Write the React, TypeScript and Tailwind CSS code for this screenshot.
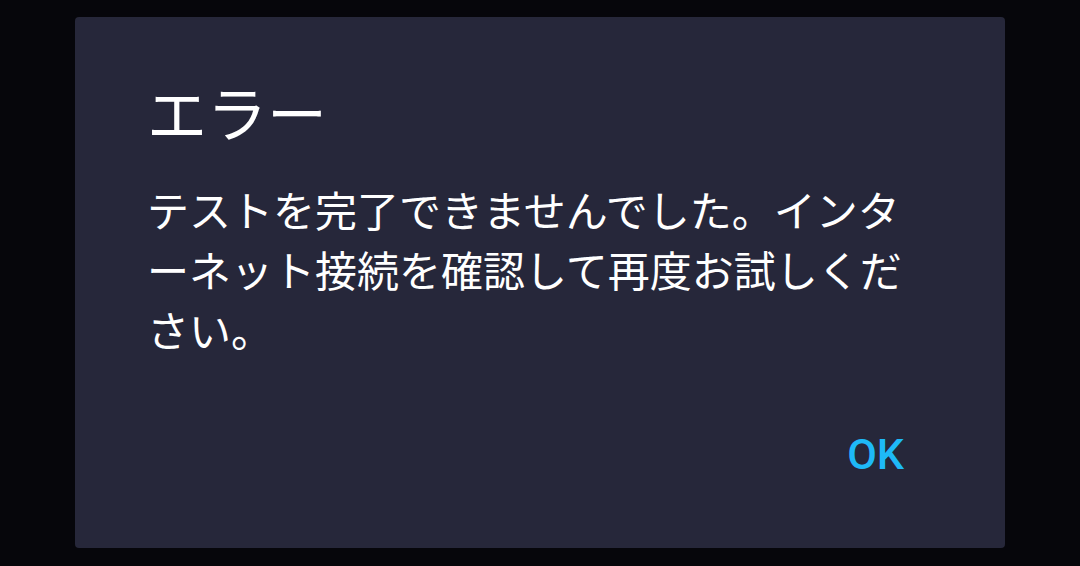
export default function App() {
  return (
    <div className="h-[566px] w-[1080px] bg-[#06060b] pt-[17px] pl-[75px]">
      <div
        className="flex h-[531px] w-[930px] flex-col rounded-[4px] bg-[#26273a] pl-[72px] pr-[75px]"
        style={{ fontFamily: '"Noto Sans CJK JP", "Noto Sans", sans-serif' }}
      >
        <h1 className="mt-[54px] text-[60px] leading-[80px] text-white">エラー</h1>
        <p className="mt-[28px] text-[42px] leading-[60px] text-white">
          テストを完了できませんでした。インターネット接続を確認して再度お試しください。
        </p>
        <div className="mt-auto mb-[72px] mr-[26px] flex justify-end">
          <button
            className="text-[43px] font-medium leading-none text-[#1eb9f7]"
            style={{ fontFamily: 'Roboto, "Liberation Sans", sans-serif' }}
          >
            OK
          </button>
        </div>
      </div>
    </div>
  )
}
